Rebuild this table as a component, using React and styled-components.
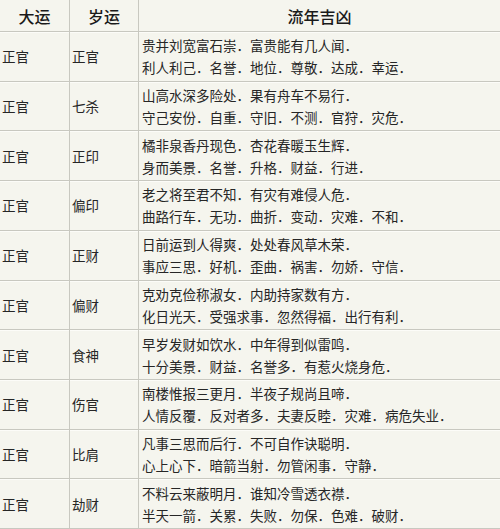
import { Fragment } from 'react'
import styled, { createGlobalStyle } from 'styled-components'

const GlobalStyle = createGlobalStyle`
  html, body {
    margin: 0;
    padding: 0;
    background: #f5f5ee;
  }
  body {
    font-family: "Noto Sans CJK SC", "Noto Sans", sans-serif;
    color: #222;
  }
`

const Table = styled.div`
  display: grid;
  grid-template-columns: 69px 68px 1fr;
  grid-template-rows: 31px repeat(10, 1fr);
  gap: 1px;
  padding-bottom: 1px;
  height: 529px;
  box-sizing: border-box;
  background: #c8c8c0;
`

const HeadCell = styled.div`
  display: flex;
  align-items: center;
  justify-content: center;
  background: #f5f5ee;
  font-size: 16px;
  font-weight: 500;
  color: #1a1a1a;
  padding-top: 1px;
`

const Cell = styled.div`
  display: flex;
  flex-direction: column;
  justify-content: center;
  background: #f5f5ee;
  box-shadow: inset 0 1px 0 #fcfcf8;
  padding-left: ${(p) => (p.$wide ? '3px' : '2px')};
  font-size: 13.5px;
  line-height: 22px;
  color: #262626;
  white-space: nowrap;
  overflow: hidden;
`

const rows = [
  ['正官', '正官', '贵并刘宽富石崇．富贵能有几人闻．', '利人利己．名誉．地位．尊敬．达成．幸运．'],
  ['正官', '七杀', '山高水深多险处．果有舟车不易行．', '守己安份．自重．守旧．不测．官狩．灾危．'],
  ['正官', '正印', '橘非泉香丹现色．杏花春暖玉生辉．', '身而美景．名誉．升格．财益．行进．'],
  ['正官', '偏印', '老之将至君不知．有灾有难侵人危．', '曲路行车．无功．曲折．变动．灾难．不和．'],
  ['正官', '正财', '日前运到人得爽．处处春风草木荣．', '事应三思．好机．歪曲．祸害．勿娇．守信．'],
  ['正官', '偏财', '克劝克俭称淑女．内助持家数有方．', '化日光天．受强求事．忽然得福．出行有利．'],
  ['正官', '食神', '早岁发财如饮水．中年得到似雷鸣．', '十分美景．财益．名誉多．有惹火烧身危．'],
  ['正官', '伤官', '南楼惟报三更月．半夜子规尚且啼．', '人情反覆．反对者多．夫妻反睦．灾难．病危失业．'],
  ['正官', '比肩', '凡事三思而后行．不可自作诀聪明．', '心上心下．暗箭当射．勿管闲事．守静．'],
  ['正官', '劫财', '不料云来蔽明月．谁知冷雪透衣襟．', '半天一箭．关累．失败．勿保．色难．破财．'],
]

export default function App() {
  return (
    <>
      <GlobalStyle />
      <Table>
        <HeadCell>大运</HeadCell>
        <HeadCell>岁运</HeadCell>
        <HeadCell>流年吉凶</HeadCell>
        {rows.map(([da, sui, l1, l2], i) => (
          <Fragment key={i}>
            <Cell>{da}</Cell>
            <Cell>{sui}</Cell>
            <Cell $wide>
              <span>{l1}</span>
              <span>{l2}</span>
            </Cell>
          </Fragment>
        ))}
      </Table>
    </>
  )
}
